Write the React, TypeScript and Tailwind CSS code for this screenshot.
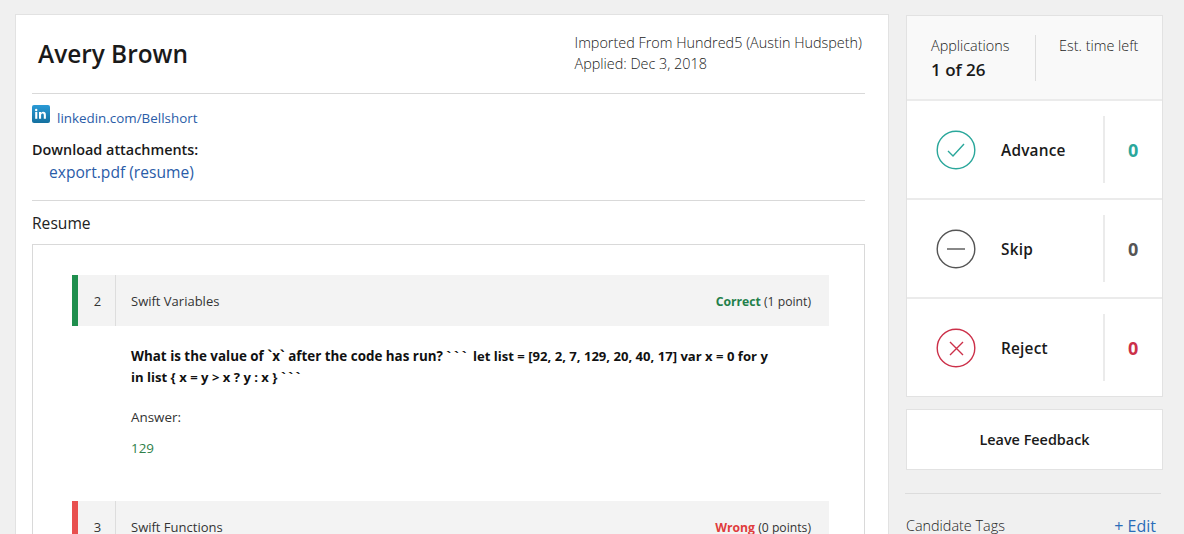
const font = { fontFamily: '"Open Sans", sans-serif' };

const ActionRow: React.FC<{ label: string; rowClass: string; icon: React.ReactNode; textClass: string }> = ({ label, rowClass, icon, textClass }) => (
  <div className={`flex items-center bg-white ${rowClass}`}>
    <div className="ml-[29px] w-[40px] h-[40px] shrink-0">{icon}</div>
    <div className="ml-[25px] w-[102px] pt-[2px] text-[15.4px] font-semibold text-[#1a1a1a] tracking-[0.2px]">{label}</div>
    <div className="h-[67px] w-[2px] bg-[#ebebeb]" />
    <div className={`flex-1 pl-[23px] pt-[1px] text-[18px] font-bold ${textClass}`}>0</div>
  </div>
);

const QuestionHeader: React.FC<{ num: number; title: string; bar: string; status: string; statusClass: string; points: string }> = ({ num, title, bar, status, statusClass, points }) => (
  <div className={`flex h-[51px] shrink-0 items-center bg-[#f3f3f3] border-l-[6px] ${bar}`}>
    <div className="flex h-full w-[38px] shrink-0 items-center justify-center border-r border-[#dddddd] pt-[3px] pl-[2px] text-[13px] text-[#333333]">{num}</div>
    <div className="ml-[15px] flex-1 pt-[3px] text-[13px] text-[#333333]">{title}</div>
    <div className="mr-[18px] pt-[3px] text-[12.2px] text-[#333333]">
      <span className={`font-bold ${statusClass}`}>{status}</span> {points}
    </div>
  </div>
);

export default function App() {
  return (
    <div style={font} className="flex h-[534px] w-[1184px] items-start overflow-hidden bg-[#f0f0f0] pl-[15px] pt-[14px]">
      {/* Main card */}
      <div className="w-[874px] h-[600px] shrink-0 border border-[#e2e2e2] bg-white pl-[16px] pr-[22px]">
        <div className="flex h-[79px] mr-px justify-between border-b border-[#d9d9d9]">
          <h1 className="ml-[6px] mt-[22px] text-[24.4px] leading-[34px] font-semibold text-[#1a1a1a]">Avery Brown</h1>
          <div className="mr-[3px] mt-[17px] text-[14.4px] leading-[21px] font-light text-[#222222]">
            <div>Imported From Hundred5 (Austin Hudspeth)</div>
            <div>Applied: Dec 3, 2018</div>
          </div>
        </div>

        <div className="mt-[11px] flex items-start">
          <svg width="18" height="18" viewBox="0 0 18 18" className="shrink-0">
            <defs>
              <linearGradient id="li" x1="0" y1="0" x2="0" y2="1">
                <stop offset="0" stopColor="#2a9ad6" />
                <stop offset="1" stopColor="#14709f" />
              </linearGradient>
            </defs>
            <rect width="18" height="18" rx="2" fill="url(#li)" />
            <rect x="3.2" y="7" width="2.1" height="6.8" fill="#fff" />
            <circle cx="4.2" cy="5" r="1.2" fill="#fff" />
            <path d="M7 7h2v1c.5-.8 1.2-1.2 2.2-1.2 1.8 0 2.7 1.1 2.7 3.1v3.9h-2.1v-3.6c0-1-.4-1.6-1.2-1.6-.9 0-1.5.6-1.5 1.6v3.6H7z" fill="#fff" />
          </svg>
          <a className="ml-[7px] mt-[4px] text-[13.4px] leading-[18px] text-[#2a5ca8]">linkedin.com/Bellshort</a>
        </div>
        <div className="mt-[13px] text-[14.4px] leading-[20px] font-semibold text-[#1a1a1a]">Download attachments:</div>
        <div className="ml-[17px] mt-px text-[15.6px] leading-[22px] text-[#2a5ca8]">export.pdf (resume)</div>
        <div className="mt-[17px] mr-px border-t border-[#d9d9d9]" />
        <div className="mt-[11px] text-[15.6px] leading-[22px] text-[#222222]">Resume</div>

        <div className="mt-[10px] mr-px h-[400px] border border-[#d9d9d9] pl-[39px] pr-[35px] pt-[30px]">
          <QuestionHeader num={2} title="Swift Variables" bar="border-[#1f8f4e]" status="Correct" statusClass="text-[#23804a]" points="(1 point)" />
          <div className="ml-[59px] mt-[20px] w-[645px] text-[13.1px] leading-[21px] font-bold text-[#111111]">
            <span className="text-[13.4px]">What is the value of `x` after the code has run?</span> <span className="tracking-[3px]">```</span> let list = [92, 2, 7, 129, 20, 40, 17] var x = 0 for y in list {'{'} x = y &gt; x ? y : x {'}'} <span className="tracking-[2.5px]">```</span>
          </div>
          <div className="ml-[59px] mt-[19px] text-[13.4px] leading-[20px] text-[#333333]">Answer:</div>
          <div className="ml-[59px] mt-[11px] text-[13.4px] leading-[20px] text-[#2f8049]">129</div>
          <div className="mt-[43px]">
            <QuestionHeader num={3} title="Swift Functions" bar="border-[#e8504f]" status="Wrong" statusClass="text-[#e03c3c]" points="(0 points)" />
          </div>
        </div>
      </div>

      {/* Sidebar */}
      <div className="ml-[17px] w-[257px] shrink-0 pt-px">
        <div className="border border-[#e2e2e2]">
          <div className="flex h-[85px] border-b-2 border-[#ebebeb] bg-[#f9f9f9]">
            <div className="ml-[24px] w-[104px] pt-[19px]">
              <div className="text-[14.4px] leading-[21px] font-light text-[#222222]">Applications</div>
              <div className="mt-[2px] text-[17px] leading-[24px] font-semibold text-[#1a1a1a]">1 of 26</div>
            </div>
            <div className="mt-[19px] h-[46px] w-px bg-[#dddddd]" />
            <div className="ml-[23px] pt-[19px] text-[14.4px] leading-[21px] font-light text-[#222222]">Est. time left</div>
          </div>
          <ActionRow
            label="Advance"
            rowClass="h-[99px] border-b-2 border-[#ebebeb]"
            textClass="text-[#2aa79b]"
            icon={
              <svg width="40" height="40" viewBox="0 0 40 40" fill="none" stroke="#2aa79b" strokeWidth="1.4">
                <circle cx="20" cy="20" r="18.8" />
                <path d="M12 21l5 5 11-12" />
              </svg>
            }
          />
          <ActionRow
            label="Skip"
            rowClass="h-[99px] border-b-2 border-[#ebebeb]"
            textClass="text-[#555555]"
            icon={
              <svg width="40" height="40" viewBox="0 0 40 40" fill="none" stroke="#555555" strokeWidth="1.4">
                <circle cx="20" cy="20" r="18.8" />
                <path d="M11 20h18" />
              </svg>
            }
          />
          <ActionRow
            label="Reject"
            rowClass="h-[97px]"
            textClass="text-[#cc3049]"
            icon={
              <svg width="40" height="40" viewBox="0 0 40 40" fill="none" stroke="#cc3049" strokeWidth="1.4">
                <circle cx="20" cy="20" r="18.8" />
                <path d="M14 14l13 13M27 14L14 27" />
              </svg>
            }
          />
        </div>

        <div className="mt-[12px] flex h-[61px] items-center justify-center border border-[#e2e2e2] bg-white text-[14.4px] font-semibold text-[#1a1a1a]">
          Leave Feedback
        </div>

        <div className="mt-[23px] mr-[2px] -ml-px border-t border-[#dcdcdc]" />
        <div className="mt-[22px] flex items-center justify-between pr-[7px] text-[14.4px] leading-[20px] font-light text-[#222222]">
          <span>Candidate Tags</span>
          <span className="text-[16px] font-normal text-[#2a6cb8]">+ Edit</span>
        </div>
      </div>
    </div>
  );
}
